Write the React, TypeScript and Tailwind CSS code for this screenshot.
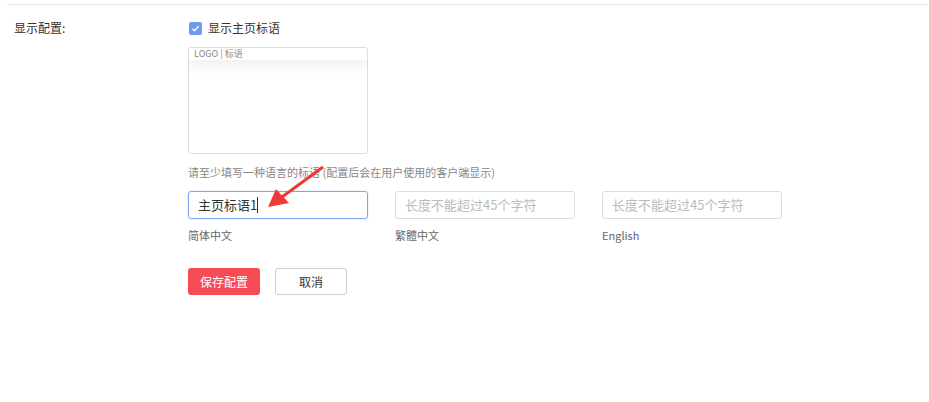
import React from "react";

export default function App() {
  const font = { fontFamily: '"Noto Sans CJK SC", "Noto Sans", sans-serif' };
  return (
    <div className="relative w-[929px] h-[402px] bg-white text-[#333]" style={font}>
      <div className="ml-[7px] mr-[1px] pt-[4px]">
        <div className="border-t border-[#e3e3e3]" />
      </div>
      <div className="flex pt-[11px]">
        <div className="w-[188px] pl-[14px] text-[12px] leading-[16px] pt-[4px] text-[#333]">显示配置:</div>
        <div className="flex flex-col">
          <label className="flex items-center gap-[6px] h-[24px]">
            <span className="w-[13px] h-[13px] rounded-[2px] bg-[#6d9bf1] flex items-center justify-center ml-[1px]">
              <svg width="9" height="9" viewBox="0 0 10 10" fill="none">
                <path d="M1.5 5.2 L4 7.5 L8.5 2.5" stroke="white" strokeWidth="1.4" />
              </svg>
            </span>
            <span className="text-[12px] text-[#333]">显示主页标语</span>
          </label>
          <div className="mt-[7px] w-[180px] h-[107px] border border-[#dcdcdc] rounded-[3px] overflow-hidden">
            <div className="h-[12px] px-[5px] text-[9px] leading-[12px] text-[#888]">LOGO | 标语</div>
            <div className="h-[14px] bg-gradient-to-b from-[#f3f3f3] to-white" />
          </div>
          <div className="mt-[11px] text-[11px] leading-[14px] text-[#888]">
            请至少填写一种语言的标语 (配置后会在用户使用的客户端显示)
          </div>
          <div className="mt-[12px] flex gap-[27px]">
            <div className="flex flex-col">
              <div className="w-[180px] h-[28px] border border-[#7ea6f0] rounded-[3px] shadow-[0_0_2px_rgba(109,155,241,0.4)] flex items-center px-[9px] text-[13px] text-[#333]">
                主页标语1<span className="w-px h-[16px] bg-[#333]" />
              </div>
              <div className="mt-[9px] text-[11px] leading-[14px] text-[#666]">简体中文</div>
            </div>
            <div className="flex flex-col">
              <div className="w-[180px] h-[28px] border border-[#dcdcdc] rounded-[3px] flex items-center px-[9px] text-[13px] text-[#bbb]">
                长度不能超过45个字符
              </div>
              <div className="mt-[9px] text-[11px] leading-[14px] text-[#666]">繁體中文</div>
            </div>
            <div className="flex flex-col">
              <div className="w-[180px] h-[28px] border border-[#dcdcdc] rounded-[3px] flex items-center px-[9px] text-[13px] text-[#bbb]">
                长度不能超过45个字符
              </div>
              <div className="mt-[9px] text-[11px] leading-[14px] text-[#666]">English</div>
            </div>
          </div>
          <div className="mt-[26px] flex gap-[15px]">
            <button className="w-[72px] h-[27px] rounded-[3px] bg-[#f54d55] text-white text-[12px]">保存配置</button>
            <button className="w-[72px] h-[27px] rounded-[3px] border border-[#cfcfcf] bg-white text-[#333] text-[12px]">取消</button>
          </div>
        </div>
      </div>
      <svg className="absolute left-0 top-0 pointer-events-none" width="929" height="402">
        <line x1="323" y1="167" x2="282" y2="197" stroke="#ee3a35" strokeWidth="3" />
        <polygon points="268,207 276,189 289,203" fill="#ee3a35" />
      </svg>
    </div>
  );
}
